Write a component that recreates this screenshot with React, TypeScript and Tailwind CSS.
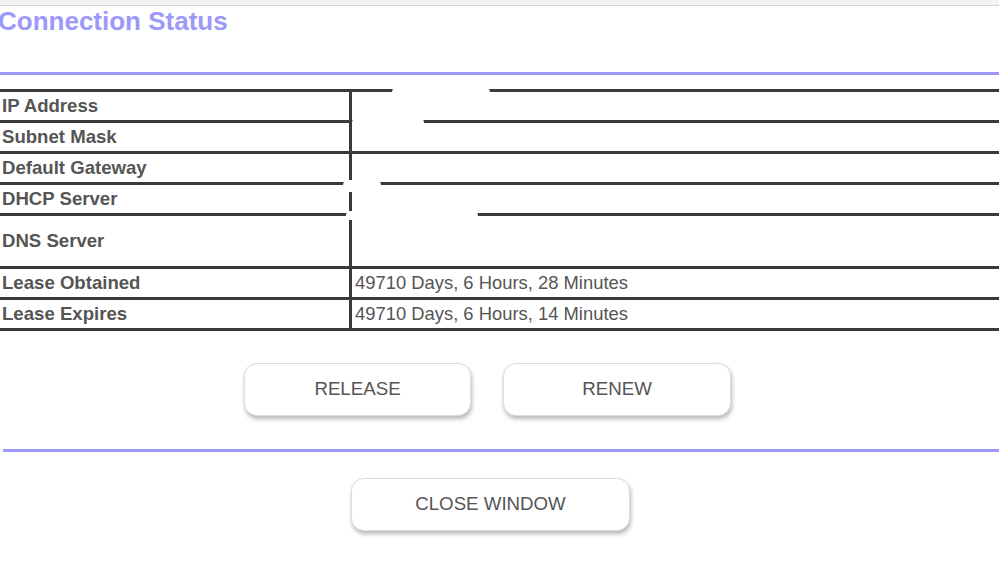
import React from 'react';

/* ── Connection status rows ───────────────────────────────────────── */
const rows: { label: string; value: string; tall?: boolean }[] = [
  { label: 'IP Address', value: '' },
  { label: 'Subnet Mask', value: '' },
  { label: 'Default Gateway', value: '' },
  { label: 'DHCP Server', value: '' },
  { label: 'DNS Server', value: '', tall: true },
  { label: 'Lease Obtained', value: '49710 Days, 6 Hours, 28 Minutes' },
  { label: 'Lease Expires', value: '49710 Days, 6 Hours, 14 Minutes' },
];

// white scribbles that hide the private addresses
const redactions = [
  { left: 392, top: 87, width: 98, height: 10 },
  { left: 352, top: 118, width: 72, height: 9 },
  { left: 343, top: 180, width: 38, height: 10 },
  { left: 346, top: 211, width: 132, height: 9 },
  { left: 346, top: 186, width: 8, height: 6 },
];

function ActionButton({ label, width }: { label: string; width: string }) {
  return (
    <button
      className={`${width} h-[53px] rounded-[13px] border border-[#dcdcdc] bg-white text-[18.7px] text-[#555] shadow-[1px_3px_4px_rgba(0,0,0,0.28)]`}
    >
      {label}
    </button>
  );
}

export default function App() {
  return (
    <div className="relative w-[999px] h-[567px] overflow-hidden bg-white font-['Liberation_Sans',Arial,sans-serif]">
      {/* ── Browser strip ─────────────────────────────────────────── */}
      <div className="h-[6px] bg-[#f2f2f2] border-b border-[#d2d2d2]" />

      {/* ── Title ─────────────────────────────────────────────────── */}
      <h1 className="-ml-[2px] text-[26px] leading-[30px] font-bold text-[#9c99fb]">
        Connection Status
      </h1>

      <div className="mt-[36px] h-[3px] bg-[#9c99fb]" />

      {/* ── Status table ──────────────────────────────────────────── */}
      <div className="mt-[14px] border-t-[3px] border-[#3a3a3a]">
        {rows.map(row => (
          <div
            key={row.label}
            className={`flex border-b-[3px] border-[#3a3a3a] ${row.tall ? 'h-[53px]' : 'h-[31px]'}`}
          >
            <div className="w-[349px] flex items-center pl-[2px] text-[18.6px] font-bold text-[#555]">
              {row.label}
            </div>
            <div className="flex-1 flex items-center border-l-[3px] border-[#3a3a3a] pl-[3px] text-[18.4px] text-[#555]">
              {row.value}
            </div>
          </div>
        ))}
      </div>

      {redactions.map((r, i) => (
        <div
          key={i}
          className="absolute rounded-full bg-white"
          style={{ left: r.left, top: r.top, width: r.width, height: r.height }}
        />
      ))}

      {/* ── Release / renew ───────────────────────────────────────── */}
      <div className="mt-[32px] w-[975px] flex justify-center gap-[32px]">
        <ActionButton label="RELEASE" width="w-[227px]" />
        <ActionButton label="RENEW" width="w-[228px]" />
      </div>

      <div className="mt-[33px] ml-[3px] h-[3px] bg-[#9c99fb]" />

      <div className="mt-[26px] w-[981px] flex justify-center">
        <ActionButton label="CLOSE WINDOW" width="w-[279px]" />
      </div>
    </div>
  );
}
